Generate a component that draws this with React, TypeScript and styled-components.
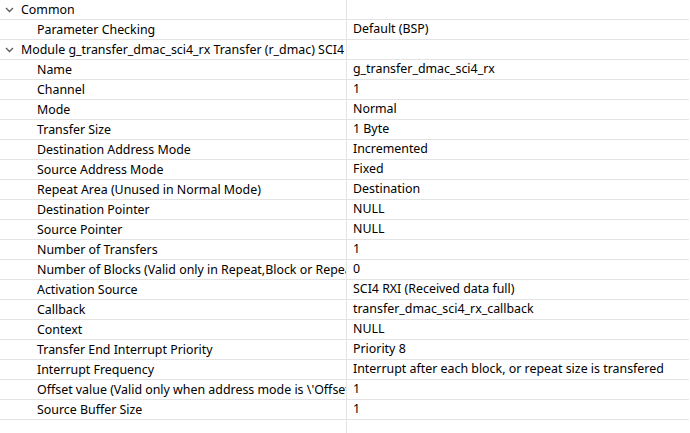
import styled, { createGlobalStyle } from 'styled-components';

const GlobalStyle = createGlobalStyle`
  html, body {
    margin: 0;
    padding: 0;
    background: #fff;
  }
  body {
    font-family: "Noto Sans", "Noto Sans CJK SC", sans-serif;
    font-size: 12.4px;
    color: #000;
  }
`;

interface Prop {
  name: string;
  value: string;
}

interface Group {
  title: string;
  props: Prop[];
}

const groups: Group[] = [
  {
    title: 'Common',
    props: [{ name: 'Parameter Checking', value: 'Default (BSP)' }],
  },
  {
    title: 'Module g_transfer_dmac_sci4_rx Transfer (r_dmac) SCI4 RXI (Received data full)',
    props: [
      { name: 'Name', value: 'g_transfer_dmac_sci4_rx' },
      { name: 'Channel', value: '1' },
      { name: 'Mode', value: 'Normal' },
      { name: 'Transfer Size', value: '1 Byte' },
      { name: 'Destination Address Mode', value: 'Incremented' },
      { name: 'Source Address Mode', value: 'Fixed' },
      { name: 'Repeat Area (Unused in Normal Mode)', value: 'Destination' },
      { name: 'Destination Pointer', value: 'NULL' },
      { name: 'Source Pointer', value: 'NULL' },
      { name: 'Number of Transfers', value: '1' },
      { name: 'Number of Blocks (Valid only in Repeat,Block or Repeat-Block Mode)', value: '0' },
      { name: 'Activation Source', value: 'SCI4 RXI (Received data full)' },
      { name: 'Callback', value: 'transfer_dmac_sci4_rx_callback' },
      { name: 'Context', value: 'NULL' },
      { name: 'Transfer End Interrupt Priority', value: 'Priority 8' },
      { name: 'Interrupt Frequency', value: 'Interrupt after each block, or repeat size is transfered' },
      { name: "Offset value (Valid only when address mode is \\'Offset\\')", value: '1' },
      { name: 'Source Buffer Size', value: '1' },
    ],
  },
];

const Table = styled.div`
  width: 690px;
  height: 433px;
  overflow: hidden;
  display: flex;
  flex-direction: column;
`;

const Row = styled.div`
  box-sizing: border-box;
  display: grid;
  grid-template-columns: 346px 1px 342px;
  height: 20px;
  border-bottom: 1px solid #e3e3e3;
  width: 689px;
  flex: none;
`;

const Filler = styled.div`
  display: grid;
  grid-template-columns: 346px 1px 1fr;
  flex: 1;
`;

const Divider = styled.div`
  background: #e3e3e3;
`;

const NameCell = styled.div<{ $indent: number }>`
  display: flex;
  align-items: center;
  padding-left: ${(p) => p.$indent}px;
  white-space: nowrap;
  overflow: hidden;
  line-height: 18px;
`;

const ValueCell = styled.div`
  padding-left: 6px;
  white-space: nowrap;
  overflow: hidden;
  line-height: 18px;
`;

const Chevron = styled.svg`
  width: 9px;
  height: 6px;
  margin-right: 7px;
  flex: none;
`;

export default function App() {
  return (
    <>
      <GlobalStyle />
      <Table>
        {groups.map((g) => (
          <div key={g.title}>
            <Row>
              <NameCell $indent={5}>
                <Chevron viewBox="0 0 9 6">
                  <path d="M1 1 L4.5 4.5 L8 1" fill="none" stroke="#5a5a5a" strokeWidth="1.3" />
                </Chevron>
                {g.title}
              </NameCell>
              <Divider />
              <div />
            </Row>
            {g.props.map((p) => (
              <Row key={p.name}>
                <NameCell $indent={37}>{p.name}</NameCell>
                <Divider />
                <ValueCell>{p.value}</ValueCell>
              </Row>
            ))}
          </div>
        ))}
        <Filler>
          <div />
          <Divider />
          <div />
        </Filler>
      </Table>
    </>
  );
}
